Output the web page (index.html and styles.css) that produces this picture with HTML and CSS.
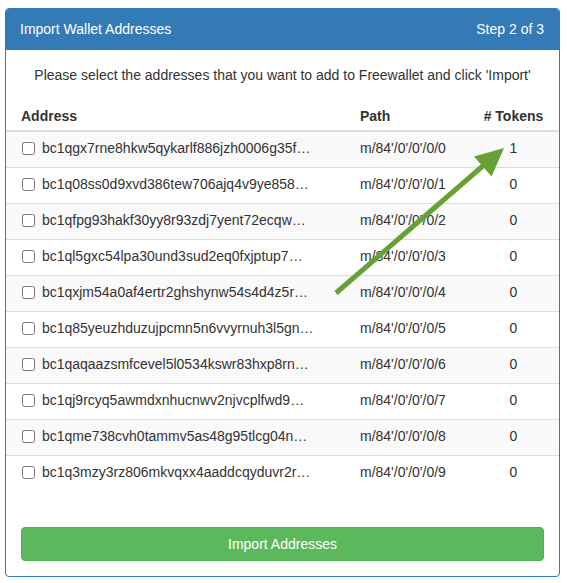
FILE: index.html
```html
<!DOCTYPE html>
<html lang="en">
<head>
  <meta charset="UTF-8" />
  <meta name="viewport" content="width=device-width, initial-scale=1.0"/>
  <title>Import Wallet Addresses - Freewallet</title>
  <link rel="stylesheet" href="styles.css">
</head>
<body>
  <div class="panel">
    <div class="panel-heading">
      <span>Import Wallet Addresses</span>
      <span>Step 2 of 3</span>
    </div>
    <div class="panel-body">
      <p class="intro">Please select the addresses that you want to add to Freewallet and click 'Import'</p>
      <table class="address-table">
        <colgroup>
          <col class="col-address">
          <col class="col-path">
          <col class="col-tokens">
        </colgroup>
        <thead>
          <tr>
            <th>Address</th>
            <th>Path</th>
            <th class="tokens">
              # Tokens
            </th>
          </tr>
        </thead>
        <tbody>
          <tr>
            <td><label><input type="checkbox"> bc1qgx7rne8hkw5qykarlf886jzh0006g35f…</label></td>
            <td>m/84'/0'/0'/0/0</td>
            <td class="tokens">1</td>
          </tr>
          <tr>
            <td><label><input type="checkbox"> bc1q08ss0d9xvd386tew706ajq4v9ye858…</label></td>
            <td>m/84'/0'/0'/0/1</td>
            <td class="tokens">0</td>
          </tr>
          <tr>
            <td><label><input type="checkbox"> bc1qfpg93hakf30yy8r93zdj7yent72ecqw…</label></td>
            <td>m/84'/0'/0'/0/2</td>
            <td class="tokens">0</td>
          </tr>
          <tr>
            <td><label><input type="checkbox"> bc1ql5gxc54lpa30und3sud2eq0fxjptup7…</label></td>
            <td>m/84'/0'/0'/0/3</td>
            <td class="tokens">0</td>
          </tr>
          <tr>
            <td><label><input type="checkbox"> bc1qxjm54a0af4ertr2ghshynw54s4d4z5r…</label></td>
            <td>m/84'/0'/0'/0/4</td>
            <td class="tokens">0</td>
          </tr>
          <tr>
            <td><label><input type="checkbox"> bc1q85yeuzhduzujpcmn5n6vvyrnuh3l5gn…</label></td>
            <td>m/84'/0'/0'/0/5</td>
            <td class="tokens">0</td>
          </tr>
          <tr>
            <td><label><input type="checkbox"> bc1qaqaazsmfcevel5l0534kswr83hxp8rn…</label></td>
            <td>m/84'/0'/0'/0/6</td>
            <td class="tokens">0</td>
          </tr>
          <tr>
            <td><label><input type="checkbox"> bc1qj9rcyq5awmdxnhucnwv2njvcplfwd9…</label></td>
            <td>m/84'/0'/0'/0/7</td>
            <td class="tokens">0</td>
          </tr>
          <tr>
            <td><label><input type="checkbox"> bc1qme738cvh0tammv5as48g95tlcg04n…</label></td>
            <td>m/84'/0'/0'/0/8</td>
            <td class="tokens">0</td>
          </tr>
          <tr>
            <td><label><input type="checkbox"> bc1q3mzy3rz806mkvqxx4aaddcqyduvr2r…</label></td>
            <td>m/84'/0'/0'/0/9</td>
            <td class="tokens">0</td>
          </tr>
        </tbody>
      </table>
      <div class="actions">
        <button type="button" class="btn-import">Import Addresses</button>
      </div>
    </div>

    <!-- callout arrow pointing at the token count -->
    <svg class="callout" width="180" height="155" viewBox="0 0 180 155">
      <line x1="4" y1="148" x2="152" y2="20" stroke="#67a035" stroke-width="5" />
      <polygon points="172,3 142,11.5 159.5,31.5" fill="#67a035" />
    </svg>
  </div>
</body>
</html>
```

FILE: styles.css
```css
body {
  font-family: "Liberation Sans", Arial, Helvetica, sans-serif;
  font-size: 14px;
  line-height: 20px;
  color: #333;
  background: #fff;
  margin: 8px 7px 0 5px;
}
.panel {
  position: relative;
  border: 1px solid #337ab7;
  border-radius: 4px;
  background: #fff;
}
.panel-heading {
  display: flex;
  justify-content: space-between;
  background: #337ab7;
  color: #fff;
  padding: 10px 15px 11px 14px;
  border-radius: 3px 3px 0 0;
}
.panel-body {
  padding: 15px 0 15px;
}
.intro {
  text-align: center;
  margin: 0 0 13px;
}
.address-table {
  width: 100%;
  border-collapse: collapse;
  table-layout: fixed;
}
.col-address {
  width: 346px;
}
.col-path {
  width: 123px;
}
.address-table th {
  text-align: left;
  font-weight: bold;
  padding: 8px 8px 4px;
  border-bottom: 2px solid #ddd;
}
.address-table td {
  padding: 6px 8px 9px;
  border-top: 1px solid #ddd;
  white-space: nowrap;
  overflow: hidden;
}
.address-table tbody tr {
  height: 36px;
}
.address-table th:first-child,
.address-table td:first-child {
  padding-left: 15px;
}
.address-table th:last-child,
.address-table td:last-child {
  padding-right: 15px;
}
.address-table tbody tr:nth-child(odd) {
  background: #f9f9f9;
}
.address-table .tokens {
  text-align: center;
}
.address-table input[type="checkbox"] {
  margin: 0 3px 0 1px;
  width: 13px;
  height: 13px;
  vertical-align: -2px;
}
.actions {
  padding: 35px 15px 0;
}
.btn-import {
  display: block;
  width: 100%;
  height: 34px;
  background: #5cb85c;
  border: 1px solid #4cae4c;
  border-radius: 4px;
  color: #fff;
  font-family: inherit;
  font-size: 14px;
  cursor: pointer;
}
.btn-import:hover {
  background: #449d44;
}
.callout {
  position: absolute;
  left: 326px;
  top: 136px;
  pointer-events: none;
}
```
